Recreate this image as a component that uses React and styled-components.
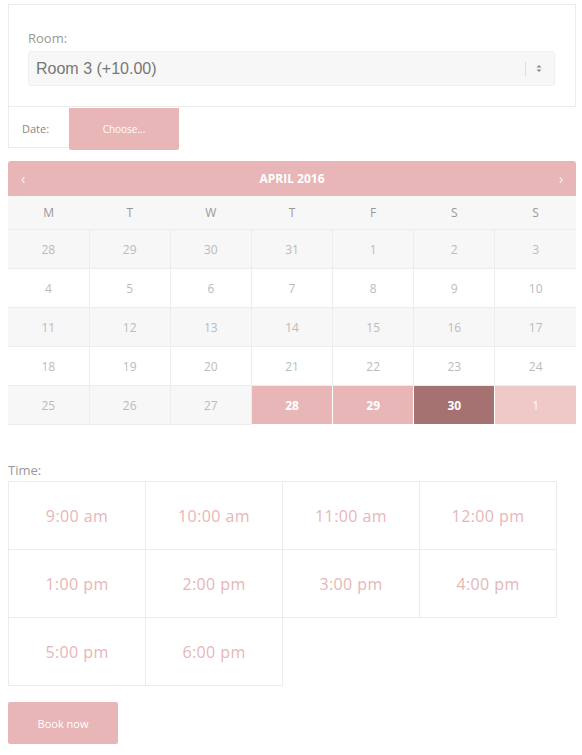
import styled, { createGlobalStyle } from "styled-components"

const GlobalStyle = createGlobalStyle`
  body {
    margin: 0;
    background: #fff;
    font-family: "Open Sans", "Noto Sans", sans-serif;
  }
`

const pink = "#e8b6b6"

const weeks = [
  [28, 29, 30, 31, 1, 2, 3],
  [4, 5, 6, 7, 8, 9, 10],
  [11, 12, 13, 14, 15, 16, 17],
  [18, 19, 20, 21, 22, 23, 24],
  [25, 26, 27, 28, 29, 30, 1],
]

const times = ["9:00 am", "10:00 am", "11:00 am", "12:00 pm", "1:00 pm", "2:00 pm", "3:00 pm", "4:00 pm", "5:00 pm", "6:00 pm"]

function dayState(w, d) {
  if (w !== 4) return null
  if (d === 3 || d === 4) return "range"
  if (d === 5) return "active"
  if (d === 6) return "next"
  return null
}

export default function App() {
  return (
    <>
      <GlobalStyle />
      <Page>
        <RoomPanel>
          <Label>Room:</Label>
          <Select>
            <span>Room 3 (+10.00)</span>
            <SelectArrows>
              <Sep />
              <svg width="6" height="9" viewBox="0 0 6 9">
                <path d="M0.5 3.5 L3 1 L5.5 3.5 Z" fill="#888" />
                <path d="M0.5 5.5 L3 8 L5.5 5.5 Z" fill="#888" />
              </svg>
            </SelectArrows>
          </Select>
        </RoomPanel>

        <DateRow>
          <DateLabel>Date:</DateLabel>
          <ChooseButton>Choose...</ChooseButton>
        </DateRow>

        <Calendar>
          <CalHeader>
            <Arrow>‹</Arrow>
            <Month>APRIL 2016</Month>
            <Arrow>›</Arrow>
          </CalHeader>
          <Table>
            <thead>
              <tr>
                {["M", "T", "W", "T", "F", "S", "S"].map((d, i) => (
                  <Th key={i}>{d}</Th>
                ))}
              </tr>
            </thead>
            <tbody>
              {weeks.map((week, w) => (
                <tr key={w}>
                  {week.map((day, d) => (
                    <Td key={d} $shade={w % 2 === 0} $state={dayState(w, d)}>
                      {day}
                    </Td>
                  ))}
                </tr>
              ))}
            </tbody>
          </Table>
        </Calendar>

        <TimeLabel>Time:</TimeLabel>
        <TimeGrid>
          {times.map((t) => (
            <TimeCell key={t}>{t}</TimeCell>
          ))}
        </TimeGrid>

        <BookButton>Book now</BookButton>
      </Page>
    </>
  )
}

const Page = styled.div`
  padding: 4px 6px 10px 8px;
  width: 568px;
`

const RoomPanel = styled.div`
  border: 1px solid #ececec;
  padding: 24px 20px 20px 19px;
`

const Label = styled.div`
  font-size: 13px;
  color: #999;
  margin-bottom: 4px;
  line-height: 18px;
`

const Select = styled.div`
  height: 35px;
  box-sizing: border-box;
  background: #f7f7f7;
  border: 1px solid #f0f0f0;
  border-radius: 3px;
  display: flex;
  align-items: center;
  justify-content: space-between;
  padding: 0 12px 0 7px;
  font-family: "Liberation Sans", Arial, sans-serif;
  font-size: 16px;
  color: #777;
`

const SelectArrows = styled.div`
  display: flex;
  align-items: center;
  gap: 10px;
`

const Sep = styled.div`
  width: 1px;
  height: 14px;
  background: #ddd;
`

const DateRow = styled.div`
  display: flex;
  align-items: flex-start;
`

const DateLabel = styled.div`
  box-sizing: border-box;
  width: 61px;
  height: 41px;
  border-left: 1px solid #ececec;
  border-bottom: 1px solid #ececec;
  font-size: 11px;
  color: #888;
  display: flex;
  align-items: center;
  padding: 2px 0 0 13px;
`

const ChooseButton = styled.div`
  width: 110px;
  height: 42px;
  margin-top: 1px;
  background: ${pink};
  color: #fff;
  font-size: 10px;
  display: flex;
  align-items: center;
  justify-content: center;
  border-radius: 0 0 2px 2px;
`

const Calendar = styled.div`
  margin-top: 11px;
`

const CalHeader = styled.div`
  height: 35px;
  background: ${pink};
  border-radius: 3px 3px 0 0;
  display: flex;
  align-items: center;
  justify-content: space-between;
  padding: 0 10px;
  color: #fff;
`

const Arrow = styled.span`
  font-size: 14px;
  width: 10px;
  text-align: center;
  opacity: 0.85;
`

const Month = styled.span`
  font-size: 12px;
  font-weight: 700;
`

const Table = styled.table`
  width: 100%;
  border-collapse: collapse;
  table-layout: fixed;
`

const Th = styled.th`
  height: 33px;
  background: #f7f7f7;
  font-weight: 400;
  font-size: 12px;
  color: #999;
  padding: 0;
`

const cellBg = (p) => {
  if (p.$state === "range") return pink
  if (p.$state === "active") return "#a57171"
  if (p.$state === "next") return "#efc8c8"
  return p.$shade ? "#f7f7f7" : "#fff"
}

const Td = styled.td`
  height: 38px;
  padding: 0;
  text-align: center;
  font-size: 12px;
  border: 1px solid ${(p) => (p.$state ? "#fff" : "#ededed")};
  background: ${cellBg};
  color: ${(p) => (p.$state ? "#fff" : "#bbb")};
  font-weight: ${(p) => (p.$state && p.$state !== "next" ? 700 : 400)};
  &:first-child { border-left: none; }
  &:last-child { border-right: none; }
`

const TimeLabel = styled.div`
  margin-top: 36px;
  font-size: 13px;
  color: #999;
  line-height: 18px;
  margin-bottom: 2px;
`

const TimeGrid = styled.div`
  display: grid;
  grid-template-columns: repeat(4, 137px);
`

const TimeCell = styled.div`
  height: 69px;
  box-sizing: border-box;
  border: 1px solid #ececec;
  margin: 0 -1px -1px 0;
  display: flex;
  align-items: center;
  justify-content: center;
  font-size: 16px;
  letter-spacing: 0.4px;
  color: ${pink};
`

const BookButton = styled.button`
  margin-top: 17px;
  width: 110px;
  height: 42px;
  border: none;
  border-radius: 2px;
  background: ${pink};
  color: #fff;
  font-family: "Open Sans", "Noto Sans", sans-serif;
  font-size: 11px;
  cursor: pointer;
`
